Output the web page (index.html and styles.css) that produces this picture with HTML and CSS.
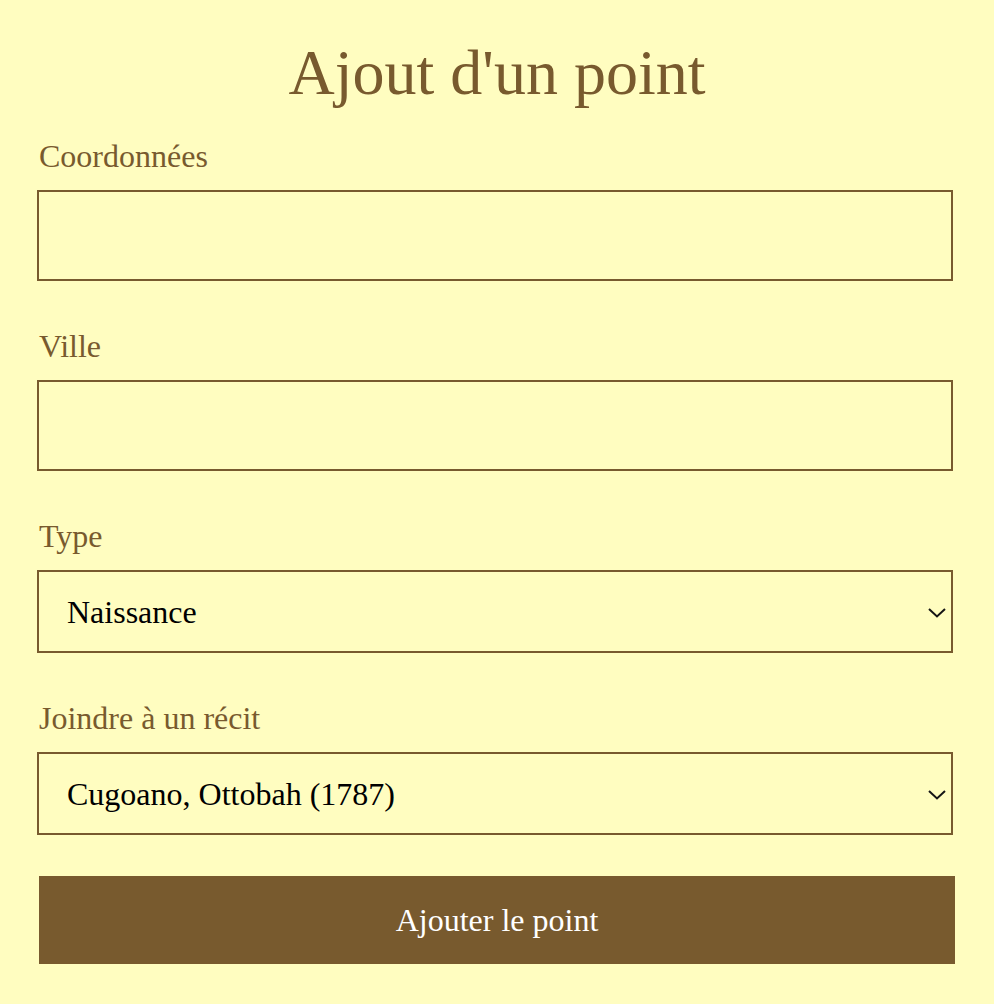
FILE: index.html
```html
<!DOCTYPE html>
<html lang="fr">
<head>
<meta charset="utf-8">
<title>Ajout d'un point</title>
<link rel="stylesheet" href="styles.css">
</head>
<body>
<main class="page">
  <h1 class="title">Ajout d'un point</h1>
  <form class="form">
    <div class="field">
      <label class="label" for="coords">Coordonnées</label>
      <input class="control input" id="coords" type="text">
    </div>
    <div class="field">
      <label class="label" for="ville">Ville</label>
      <input class="control input" id="ville" type="text">
    </div>
    <div class="field">
      <label class="label" for="type">Type</label>
      <div class="select-wrap">
        <select class="control select" id="type">
          <option>Naissance</option>
        </select>
        <svg class="chevron" width="18" height="10" viewBox="0 0 18 10" aria-hidden="true"><polyline points="1,1 9,8.5 17,1" fill="none" stroke="#151515" stroke-width="2"/></svg>
      </div>
    </div>
    <div class="field">
      <label class="label" for="recit">Joindre à un récit</label>
      <div class="select-wrap">
        <select class="control select" id="recit">
          <option>Cugoano, Ottobah (1787)</option>
        </select>
        <svg class="chevron" width="18" height="10" viewBox="0 0 18 10" aria-hidden="true"><polyline points="1,1 9,8.5 17,1" fill="none" stroke="#151515" stroke-width="2"/></svg>
      </div>
    </div>
    <button class="submit" type="button">Ajouter le point</button>
  </form>
</main>
</body>
</html>
```

FILE: styles.css
```css
html, body {
  margin: 0;
  padding: 0;
  background: #fffdc0;
}

body {
  font-family: "Liberation Serif", "Times New Roman", serif;
  color: #785a2e;
}

.page {
  padding: 37px 39px 0 39px;
}

.title {
  margin: 0 0 29px 0;
  font-size: 64px;
  line-height: 72px;
  font-weight: normal;
  text-align: center;
  color: #785a2e;
}

.form {
  display: flex;
  flex-direction: column;
  gap: 47px;
}

.field {
  display: flex;
  flex-direction: column;
  gap: 16px;
}

.label {
  font-size: 32px;
  line-height: 36px;
  color: #785a2e;
}

.control {
  box-sizing: border-box;
  margin: 0 2px 0 -2px;
  width: 916px;
  border: 2px solid #785a2e;
  border-radius: 0;
  background: transparent;
  font-family: "Liberation Serif", "Times New Roman", serif;
  font-size: 32px;
  color: #000;
  outline: none;
}

.input {
  height: 91px;
  padding: 0 28px;
}

.select-wrap {
  position: relative;
  display: flex;
}

.select {
  -webkit-appearance: none;
  appearance: none;
  height: 83px;
  padding: 0 60px 0 28px;
}

.chevron {
  position: absolute;
  right: 9px;
  top: 50%;
  transform: translateY(-40%);
  pointer-events: none;
}

.submit {
  margin-top: -6px;
  height: 88px;
  width: 916px;
  border: none;
  border-radius: 0;
  background: #785a2e;
  color: #fff;
  font-family: "Liberation Serif", "Times New Roman", serif;
  font-size: 32px;
  cursor: pointer;
}
```
